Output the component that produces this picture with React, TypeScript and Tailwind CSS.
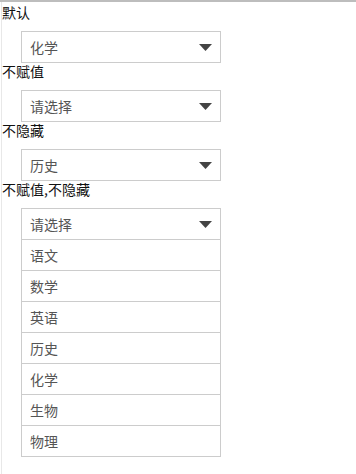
import React from "react";

const font = { fontFamily: '"Noto Sans CJK SC", "Noto Sans", sans-serif' };

function Arrow() {
  return (
    <svg width="13" height="7" viewBox="0 0 13 7" className="block">
      <polygon points="0,0 13,0 6.5,7" fill="#444" />
    </svg>
  );
}

function SelectBox({ value, open }: { value: string; open?: boolean }) {
  const items = ["语文", "数学", "英语", "历史", "化学", "生物", "物理"];
  return (
    <div className="w-[200px] border border-[#cccccc] bg-white">
      <div className="h-[30px] flex items-center justify-between pl-[8px] pr-[8px] text-[14px] text-[#555]">
        <span>{value}</span>
        <Arrow />
      </div>
      {open && (
        <div>
          {items.map((it) => (
            <div
              key={it}
              className="h-[31px] border-t border-[#cccccc] flex items-center pl-[8px] text-[14px] text-[#555]"
            >
              {it}
            </div>
          ))}
        </div>
      )}
    </div>
  );
}

function Block({ label, value, open }: { label: string; value: string; open?: boolean }) {
  return (
    <div>
      <div className="h-[17px] leading-[17px] text-[14px] text-[#111] pl-[0px]">{label}</div>
      <div className="pt-[10px] pl-[19px]">
        <SelectBox value={value} open={open} />
      </div>
    </div>
  );
}

export default function App() {
  return (
    <div
      className="w-[356px] h-[474px] bg-white border-t-2 border-[#bdbdbd] overflow-hidden"
      style={font}
    >
      <div className="ml-[1px] border-l border-[#e8e8e8] h-full pt-[2px]">
        <Block label="默认" value="化学" />
        <Block label="不赋值" value="请选择" />
        <Block label="不隐藏" value="历史" />
        <Block label="不赋值,不隐藏" value="请选择" open />
      </div>
    </div>
  );
}
